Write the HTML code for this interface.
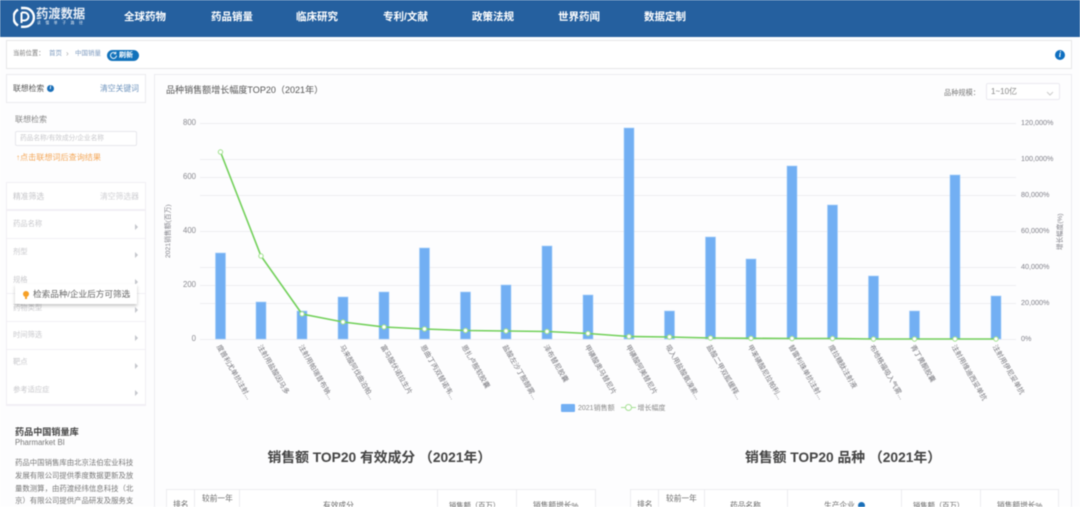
<!DOCTYPE html>
<html><head><meta charset="utf-8">
<style>
html,body{margin:0;padding:0;width:1080px;height:507px;overflow:hidden;background:#fff}
body{position:relative;font-family:"Liberation Sans","Noto Sans CJK SC",sans-serif;color:#555}
.a{position:absolute;white-space:nowrap;line-height:1}
.box{position:absolute;box-sizing:border-box;background:#fff;border:1px solid #ebebee}
#wrap{position:absolute;left:0;top:0;width:1080px;height:507px;overflow:hidden;background:#fdfdfe;filter:blur(.5px)}
.nav{position:absolute;top:12px;font-size:10.5px;font-weight:bold;color:#fff;line-height:1;white-space:nowrap}
.f{position:absolute;left:13px;font-size:7.300px;color:#c8c8cc;line-height:1;white-space:nowrap}
.arr{position:absolute;left:135px;width:0;height:0;border-left:3px solid #c4c6cc;border-top:3px solid transparent;border-bottom:3px solid transparent}
.fl{position:absolute;left:7px;width:138px;height:1px;background:#f2eff5}
.p{position:absolute;left:15px;font-size:7.400px;color:#777;line-height:1;white-space:nowrap}
.v{position:absolute;top:489px;width:1px;height:18px;background:#ececef}
.th{position:absolute;font-size:7.700px;color:#666;line-height:1;white-space:nowrap}
</style></head><body>
<div id="wrap">
<div style="position:absolute;left:0;top:0;width:1080px;height:37px;background:#25609f"></div>
<svg style="position:absolute;left:13px;top:6px" width="22" height="23" viewBox="0 0 22 23">
<path d="M5 3.500A9.500 9.500 0 0 0 5 19.500" fill="none" stroke="#fff" stroke-width="2.400"/>
<path d="M8 2H11.500A9.300 9.300 0 0 1 11.500 20.800H8" fill="none" stroke="#fff" stroke-width="2.400"/>
<path d="M8.500 6.500V17M8.500 6.500H11.500A4 4 0 0 1 11.500 14.500H8.500" fill="none" stroke="#fff" stroke-width="2"/>
</svg>
<div class="a" style="left:36px;top:8px;font-size:12.300px;font-weight:bold;color:#e8eef6">药渡数据</div>
<div class="a" style="left:37px;top:22px;font-size:3.800px;color:#dfe8f2;letter-spacing:4.600px">读懂单子路径</div>
<div class="nav" style="left:124px">全球药物</div>
<div class="nav" style="left:211px">药品销量</div>
<div class="nav" style="left:296px">临床研究</div>
<div class="nav" style="left:383px">专利/文献</div>
<div class="nav" style="left:472px">政策法规</div>
<div class="nav" style="left:558px">世界药闻</div>
<div class="nav" style="left:644px">数据定制</div>

<div class="box" style="left:6px;top:40px;width:1066px;height:29px;border-color:#e6e6e8"></div>
<div class="a" style="left:13px;top:51px;font-size:6.300px;color:#777">当前位置：</div>
<div class="a" style="left:49px;top:51px;font-size:6.500px;color:#7f9cc0">首页</div>
<div class="a" style="left:66px;top:50px;font-size:8px;color:#aaa">›</div>
<div class="a" style="left:75px;top:51px;font-size:6.500px;color:#7f9cc0">中国销量</div>
<div style="position:absolute;left:107px;top:50px;width:32px;height:11px;border-radius:6px;background:#1272bb"></div>
<svg style="position:absolute;left:109px;top:51px" width="9" height="9"><path d="M7.500 4.500A3 3 0 1 1 6.500 2.200M6.800 0.800V2.800H4.800" fill="none" stroke="#e4f0f9" stroke-width="1"/></svg>
<div class="a" style="left:119px;top:51.500px;font-size:7px;font-weight:bold;color:#fff">刷新</div>
<div style="position:absolute;left:1055px;top:50px;width:10px;height:10px;border-radius:50%;background:#0f6fc0;color:#fff;font:italic bold 8px/10px 'Liberation Serif',serif;text-align:center">i</div>

<div class="box" style="left:6px;top:74px;width:140px;height:29px"></div>
<div class="a" style="left:13px;top:85px;font-size:7.800px;color:#555">联想检索</div>
<div style="position:absolute;left:47px;top:85px;width:7px;height:7px;border-radius:50%;background:#1a6fb8;color:#fff;font:italic bold 6px/7px 'Liberation Serif',serif;text-align:center">i</div>
<div class="a" style="left:100px;top:85px;font-size:7.800px;color:#6d93bd">清空关键词</div>
<div class="a" style="left:15px;top:116px;font-size:8px;color:#888">联想检索</div>
<div style="position:absolute;left:15px;top:131px;width:122px;height:15px;box-sizing:border-box;border:1px solid #e8e8ec;border-radius:2px;background:#fff"></div>
<div class="a" style="left:20px;top:135.500px;font-size:6.700px;color:#c8c8cc">药品名称/有效成分/企业名称</div>
<div class="a" style="left:16px;top:154px;font-size:8.100px;color:#f4a85a">↑点击联想词后查询结果</div>

<div class="box" style="left:6px;top:182px;width:140px;height:224px;border-color:#f1eff4"></div>
<div class="a" style="left:13px;top:193px;font-size:7.800px;color:#c4c4c8">精准筛选</div>
<div class="a" style="left:100px;top:193px;font-size:7.800px;color:#cfcfd3">清空筛选器</div>
<div class="fl" style="top:209px;height:2px"></div>
<div class="f" style="top:219.500px">药品名称</div><div class="arr" style="top:224px"></div>
<div class="fl" style="top:238px"></div>
<div class="f" style="top:248px">剂型</div><div class="arr" style="top:252px"></div>
<div class="f" style="top:276px">规格</div><div class="arr" style="top:279px"></div>
<div class="fl" style="top:293px"></div>
<div class="f" style="top:304px">药物类型</div><div class="arr" style="top:307px"></div>
<div class="fl" style="top:321px"></div>
<div class="f" style="top:331px">时间筛选</div><div class="arr" style="top:335px"></div>
<div class="fl" style="top:349px"></div>
<div class="f" style="top:358px">靶点</div><div class="arr" style="top:363px"></div>
<div class="f" style="top:386px">参考适应症</div><div class="arr" style="top:390px"></div>
<div class="fl" style="top:404px;height:2px"></div>

<div style="position:absolute;left:15px;top:284px;width:122px;height:20px;background:#fff;box-shadow:0 2px 3px rgba(0,0,0,.22)"></div>
<div style="position:absolute;left:23px;top:291px;width:6px;height:6px;border-radius:50%;background:#f6a025"></div>
<div style="position:absolute;left:25px;top:297px;width:2px;height:2px;background:#f6a025"></div>
<div class="a" style="left:33px;top:290px;font-size:8.640px;color:#666">检索品种/企业后方可筛选</div>

<div class="a" style="left:15px;top:427.500px;font-size:9.100px;font-weight:bold;color:#444">药品中国销量库</div>
<div class="a" style="left:15px;top:439px;font-size:7.800px;color:#777">Pharmarket BI</div>
<div class="p" style="top:459px">药品中国销售库由北京法伯宏业科技</div>
<div class="p" style="top:472px">发展有限公司提供季度数据更新及放</div>
<div class="p" style="top:484.500px">量数测算，由药渡经纬信息科技（北</div>
<div class="p" style="top:496.500px">京）有限公司提供产品研发及服务支</div>

<div class="box" style="left:154px;top:74px;width:918px;height:440px;border-color:#ececf0;background:#fdfdfe"></div>
<div class="a" style="left:166px;top:86px;font-size:9.050px;color:#555">品种销售额增长幅度TOP20（2021年）</div>
<div class="a" style="left:944px;top:88.500px;font-size:7.200px;color:#777">品种规模：</div>
<div style="position:absolute;left:986px;top:83px;width:74px;height:17px;box-sizing:border-box;border:1px solid #ebe9f0;border-radius:2px;background:#fff"></div>
<div class="a" style="left:991px;top:88px;font-size:8px;color:#888">1~10亿</div>
<svg style="position:absolute;left:1046px;top:91px" width="8" height="5"><path d="M1 1L4 4L7 1" fill="none" stroke="#ccc"/></svg>

<svg style="position:absolute;left:0;top:0" width="1080" height="507" font-family="Liberation Sans,Noto Sans CJK SC,sans-serif">
<g stroke="#eeeef1" stroke-width="1">
<path d="M200 123.500H1016M200 159.500H1016M200 177.500H1016M200 195.500H1016M200 231.500H1016M200 267.500H1016M200 285.500H1016M200 303.500H1016M200 339.500H1016"/>
</g>
<g font-size="7.800" fill="#8a8a90" text-anchor="end">
<text x="196" y="125">800</text><text x="196" y="179">600</text><text x="196" y="233">400</text><text x="196" y="287">200</text><text x="196" y="341">0</text>
</g>
<g font-size="7.200" fill="#80808a">
<text x="1021" y="125">120,000%</text><text x="1021" y="161">100,000%</text><text x="1021" y="197">80,000%</text><text x="1021" y="233">60,000%</text><text x="1021" y="269">40,000%</text><text x="1021" y="305">20,000%</text><text x="1021" y="341">0%</text>
</g>
<text transform="translate(170 258) rotate(-90)" font-size="6.800" fill="#808088">2021销售额(百万)</text>
<text transform="translate(1062 250) rotate(-90)" font-size="6.600" fill="#808088">增长幅度(%)</text>
<g fill="#72aff3" stroke="#a5cdf8" stroke-width=".6">
<rect x="215.500" y="253" width="10" height="86"/><rect x="256" y="302" width="10" height="37"/><rect x="297" y="311" width="10" height="28"/><rect x="338" y="297" width="10" height="42"/><rect x="379" y="292" width="10" height="47"/><rect x="419.500" y="248" width="10" height="91"/><rect x="460.500" y="292" width="10" height="47"/><rect x="501" y="285" width="10" height="54"/><rect x="542" y="246" width="10" height="93"/><rect x="583" y="295" width="10" height="44"/><rect x="624" y="128" width="10" height="211"/><rect x="664.500" y="311" width="10" height="28"/><rect x="705.500" y="237" width="10" height="102"/><rect x="746" y="259" width="10" height="80"/><rect x="787" y="166" width="10" height="173"/><rect x="827.500" y="205" width="10" height="134"/><rect x="868.500" y="276" width="10" height="63"/><rect x="909.500" y="311" width="10" height="28"/><rect x="950" y="175" width="10" height="164"/><rect x="991" y="296" width="10" height="43"/>
</g>
<polyline fill="none" stroke="#72d05a" stroke-width="1.600" points="220.500,152 261,256 302,314 343,322 384,327 424.500,329 465.500,330.500 506,331 547,331.500 588,333.500 629,336.500 669.500,337 710.500,338 751,338.300 792,338.500 832.500,338.500 873.500,339 914.500,339 955,339 996,339"/>
<g fill="#fff" stroke="#9fe08c" stroke-width="1">
<circle cx="220.500" cy="152" r="2.200"/><circle cx="261" cy="256" r="2.200"/><circle cx="302" cy="314" r="2.200"/><circle cx="343" cy="322" r="2.200"/><circle cx="384" cy="327" r="2.200"/><circle cx="424.500" cy="329" r="2.200"/><circle cx="465.500" cy="330.500" r="2.200"/><circle cx="506" cy="331" r="2.200"/><circle cx="547" cy="331.500" r="2.200"/><circle cx="588" cy="333.500" r="2.200"/><circle cx="629" cy="336.500" r="2.200"/><circle cx="669.500" cy="337" r="2.200"/><circle cx="710.500" cy="338" r="2.200"/><circle cx="751" cy="338.300" r="2.200"/><circle cx="792" cy="338.500" r="2.200"/><circle cx="832.500" cy="338.500" r="2.200"/><circle cx="873.500" cy="339" r="2.200"/><circle cx="914.500" cy="339" r="2.200"/><circle cx="955" cy="339" r="2.200"/><circle cx="996" cy="339" r="2.200"/>
</g>
<g font-size="7" fill="#77777d">
<text transform="translate(216.500 346.500) rotate(60)">度普利尤单抗注射...</text>
<text transform="translate(257.500 346.500) rotate(60)">注射用盐酸因马多</text>
<text transform="translate(298.500 346.500) rotate(60)">注射用帕瑞昔布钠...</text>
<text transform="translate(339.500 346.500) rotate(60)">马来酸阿伐曲泊帕...</text>
<text transform="translate(380.500 346.500) rotate(60)">富马酸伏诺拉生片</text>
<text transform="translate(420.500 346.500) rotate(60)">恩曲丁丙双替诺韦...</text>
<text transform="translate(461.500 346.500) rotate(60)">恩扎卢胺软胶囊</text>
<text transform="translate(502.500 346.500) rotate(60)">盐酸左沙丁胺醇雾...</text>
<text transform="translate(543.500 346.500) rotate(60)">泽布替尼胶囊</text>
<text transform="translate(584.500 346.500) rotate(60)">甲磺酸奥马替尼片</text>
<text transform="translate(625.500 346.500) rotate(60)">甲磺酸阿美替尼片</text>
<text transform="translate(665.500 346.500) rotate(60)">吸入用盐酸氨溴索...</text>
<text transform="translate(706.500 346.500) rotate(60)">盐酸二甲双胍缓释...</text>
<text transform="translate(747.500 346.500) rotate(60)">甲苯磺酸尼拉帕利...</text>
<text transform="translate(788.500 346.500) rotate(60)">替雷利珠单抗注射...</text>
<text transform="translate(828.500 346.500) rotate(60)">度拉糖肽注射液</text>
<text transform="translate(869.500 346.500) rotate(60)">布地格福吸入气雾...</text>
<text transform="translate(910.500 346.500) rotate(60)">青丁黄酮胶囊</text>
<text transform="translate(951.500 346.500) rotate(60)">注射用维迪西妥单抗</text>
<text transform="translate(992.500 346.500) rotate(60)">注射用伊尼妥单抗</text>
</g>
<rect x="561" y="404" width="14" height="8" rx="1" fill="#72aff3"/>
<text x="578" y="410" font-size="7" fill="#888">2021销售额</text>
<path d="M621 407.500H636" stroke="#a5e094"/><circle cx="628.500" cy="407.500" r="3" fill="#fff" stroke="#a5e094"/>
<text x="637.500" y="410" font-size="7" fill="#888">增长幅度</text>
</svg>

<div class="a" style="left:267.500px;top:451px;font-size:13.800px;font-weight:bold;color:#444">销售额 TOP20 有效成分 （2021年）</div>
<div class="a" style="left:745px;top:451px;font-size:13.800px;font-weight:bold;color:#444">销售额 TOP20 品种 （2021年）</div>

<div style="position:absolute;left:166px;top:489px;width:430px;height:18px;box-sizing:border-box;border:1px solid #ececef;border-bottom:0;background:#fff"></div>
<div style="position:absolute;left:630px;top:489px;width:429px;height:18px;box-sizing:border-box;border:1px solid #ececef;border-bottom:0;background:#fff"></div>
<div class="v" style="left:194px"></div><div class="v" style="left:239px"></div><div class="v" style="left:437px"></div><div class="v" style="left:516px"></div>
<div class="v" style="left:658px"></div><div class="v" style="left:704px"></div><div class="v" style="left:787px"></div><div class="v" style="left:901px"></div><div class="v" style="left:980px"></div>
<div class="th" style="left:173px;top:501px">排名</div>
<div class="th" style="left:202px;top:495px">较前一年</div>
<div class="th" style="left:323px;top:502px">有效成分</div>
<div class="th" style="left:449px;top:502px;font-size:7.300px">销售额（百万）</div>
<div class="th" style="left:533px;top:502px">销售额增长%</div>
<div class="th" style="left:637px;top:501px">排名</div>
<div class="th" style="left:666px;top:495px">较前一年</div>
<div class="th" style="left:730px;top:502px">药品名称</div>
<div class="th" style="left:824px;top:502px">生产企业</div>
<div style="position:absolute;left:858px;top:502px;width:7px;height:7px;border-radius:50%;background:#1a6fb8"></div>
<div class="th" style="left:913px;top:502px;font-size:7.300px">销售额（百万）</div>
<div class="th" style="left:997px;top:502px">销售额增长%</div>
</div>
</body></html>
